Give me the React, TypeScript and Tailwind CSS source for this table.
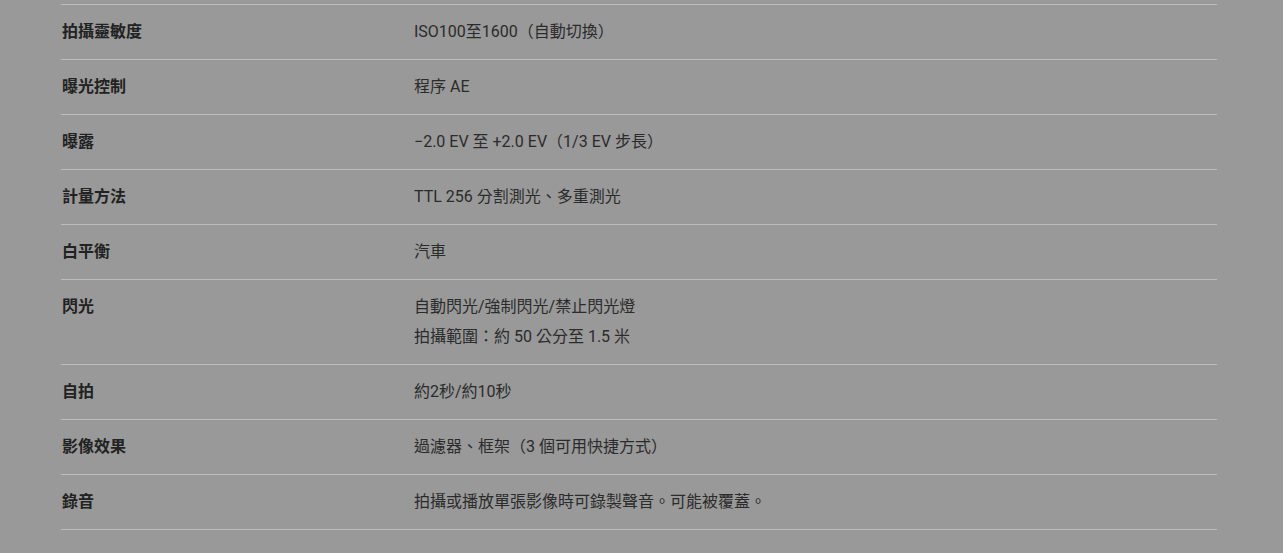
import React from "react";

const rows: { label: string; value: string[] }[] = [
  { label: "拍攝靈敏度", value: ["ISO100至1600（自動切換）"] },
  { label: "曝光控制", value: ["程序 AE"] },
  { label: "曝露", value: ["−2.0 EV 至 +2.0 EV（1/3 EV 步長）"] },
  { label: "計量方法", value: ["TTL 256 分割測光、多重測光"] },
  { label: "白平衡", value: ["汽車"] },
  { label: "閃光", value: ["自動閃光/強制閃光/禁止閃光燈", "拍攝範圍：約 50 公分至 1.5 米"] },
  { label: "自拍", value: ["約2秒/約10秒"] },
  { label: "影像效果", value: ["過濾器、框架（3 個可用快捷方式）"] },
  { label: "錄音", value: ["拍攝或播放單張影像時可錄製聲音。可能被覆蓋。"] },
];

export default function App() {
  return (
    <div
      className="w-[1283px] h-[553px] overflow-hidden bg-[#999999] pt-[4px]"
      style={{ fontFamily: 'Roboto, "Noto Sans CJK TC", sans-serif' }}
    >
      <div className="ml-[61px] w-[1156px] border-t border-[#bcbcbc]">
        {rows.map((r) => (
          <div key={r.label} className="flex border-b border-[#bcbcbc] py-[12px] text-[16px] leading-[30px]">
            <div className="w-[353px] pl-[1px] font-bold text-[#222222]">{r.label}</div>
            <div className="flex-1 text-[#2b2b2b]">
              {r.value.map((v) => (
                <div key={v}>{v}</div>
              ))}
            </div>
          </div>
        ))}
      </div>
    </div>
  );
}
